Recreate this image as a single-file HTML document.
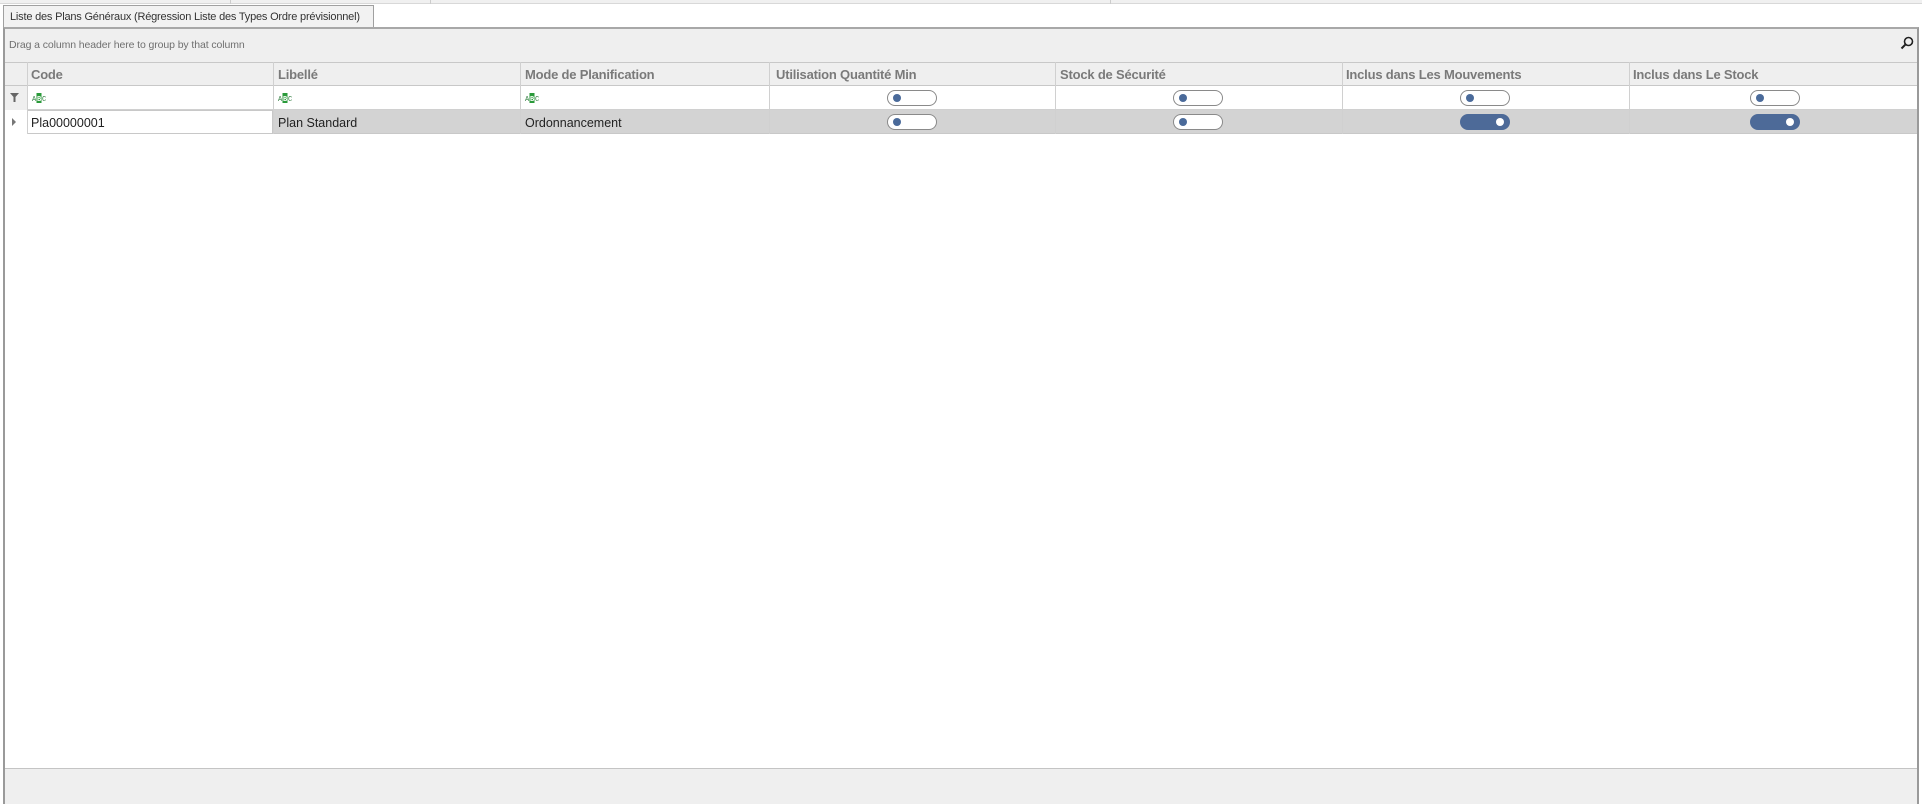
<!DOCTYPE html>
<html><head><meta charset="utf-8"><style>
*{box-sizing:border-box;margin:0;padding:0}
body{width:1922px;height:804px;background:#fff;font-family:"Liberation Sans",sans-serif;position:relative;overflow:hidden}
.a{position:absolute}
.hd{font-weight:bold;color:#7a7a7a;font-size:13px;top:67px;letter-spacing:-0.2px}
.tg{position:absolute;width:50px;height:16px;border-radius:8px;border:1px solid #8a8a8a;background:#fff}
.tg::after{content:"";position:absolute;left:5px;top:3px;width:8px;height:8px;border-radius:50%;background:#4a6a9a}
.tg.on{background:#4d6a98;border-color:#4d6a98}
.tg.on::after{left:auto;right:5px;background:#fff}
.abc{position:absolute;top:93px}
.vl{position:absolute;width:1px;background:#d0d0d0}
.dt{position:absolute;top:116px;font-size:12.5px;color:#222}
</style></head><body>
<div class="a" style="left:0;top:0;width:1922px;height:4px;background:#f0f0f0;border-bottom:1px solid #d8d8d8"></div>
<div class="a" style="left:230px;top:0;width:1px;height:4px;background:#ccc"></div>
<div class="a" style="left:430px;top:0;width:1px;height:4px;background:#ccc"></div>
<div class="a" style="left:1110px;top:0;width:1px;height:4px;background:#ccc"></div>
<div class="a" style="left:3px;top:5px;width:371px;height:23px;background:#f2f2f2;border:1px solid #a0a0a0;border-bottom:none;font-size:11px;color:#333;padding:5px 0 0 6px;letter-spacing:-0.2px">Liste des Plans Généraux (Régression Liste des Types Ordre prévisionnel)</div>
<div class="a" style="left:3px;top:27px;width:1916px;height:777px;border-left:2px solid #9a9a9a;border-right:2px solid #9a9a9a;border-top:2px solid #a8a8a8;background:#fff"></div>
<div class="a" style="left:5px;top:29px;width:1912px;height:33px;background:#efefef;font-size:10.5px;color:#707070;padding:10px 0 0 4px;letter-spacing:-0.1px">Drag a column header here to group by that column</div>
<svg class="a" style="left:1900px;top:36px" width="14" height="14" viewBox="0 0 14 14"><circle cx="8.5" cy="5.5" r="4" fill="none" stroke="#222" stroke-width="1.6"/><path d="M5.5 8.5L1.5 12.5" stroke="#222" stroke-width="2"/></svg>
<div class="a" style="left:5px;top:62px;width:1912px;height:24px;background:#efefef;border-top:1px solid #c8c8c8;border-bottom:1px solid #c8c8c8"></div>
<div class="a" style="left:5px;top:86px;width:22px;height:24px;background:#efefef"></div>
<div class="a" style="left:5px;top:110px;width:22px;height:24px;background:#fff"></div>
<div class="a" style="left:27px;top:110px;width:1890px;height:24px;background:#d3d3d3;border-bottom:1px solid #c8c8c8"></div>
<div class="a" style="left:27px;top:110px;width:246px;height:24px;background:#fff;border:1px solid #c8c8c8"></div>
<div class="a" style="left:27px;top:109px;width:1890px;height:1px;background:#d0d0d0"></div>
<div class="vl" style="left:27px;top:62px;height:72px"></div>
<div class="vl" style="left:273px;top:62px;height:72px"></div>
<div class="vl" style="left:520px;top:62px;height:72px"></div>
<div class="vl" style="left:769px;top:62px;height:72px"></div>
<div class="vl" style="left:1055px;top:62px;height:72px"></div>
<div class="vl" style="left:1342px;top:62px;height:72px"></div>
<div class="vl" style="left:1629px;top:62px;height:72px"></div>
<div class="a hd" style="left:31px">Code</div>
<div class="a hd" style="left:278px">Libellé</div>
<div class="a hd" style="left:525px">Mode de Planification</div>
<div class="a hd" style="left:776px">Utilisation Quantité Min</div>
<div class="a hd" style="left:1060px">Stock de Sécurité</div>
<div class="a hd" style="left:1346px">Inclus dans Les Mouvements</div>
<div class="a hd" style="left:1633px">Inclus dans Le Stock</div>
<svg class="a" style="left:10px;top:93px" width="9" height="9" viewBox="0 0 9 9"><path d="M0 0H9L5.5 4V9H3.5V4Z" fill="#666"/></svg>
<svg class="abc" style="left:32px" width="14" height="10"><rect x="4.5" y="0" width="5" height="10" fill="#2a9a3a"/><text x="0" y="8" font-size="7" font-family="Liberation Mono" fill="#2a7a3a">A</text><text x="5" y="8" font-size="7" font-family="Liberation Mono" fill="#fff" font-weight="bold">B</text><text x="10" y="8" font-size="7" font-family="Liberation Mono" fill="#2a7a3a">C</text></svg>
<svg class="abc" style="left:278px" width="14" height="10"><rect x="4.5" y="0" width="5" height="10" fill="#2a9a3a"/><text x="0" y="8" font-size="7" font-family="Liberation Mono" fill="#2a7a3a">A</text><text x="5" y="8" font-size="7" font-family="Liberation Mono" fill="#fff" font-weight="bold">B</text><text x="10" y="8" font-size="7" font-family="Liberation Mono" fill="#2a7a3a">C</text></svg>
<svg class="abc" style="left:525px" width="14" height="10"><rect x="4.5" y="0" width="5" height="10" fill="#2a9a3a"/><text x="0" y="8" font-size="7" font-family="Liberation Mono" fill="#2a7a3a">A</text><text x="5" y="8" font-size="7" font-family="Liberation Mono" fill="#fff" font-weight="bold">B</text><text x="10" y="8" font-size="7" font-family="Liberation Mono" fill="#2a7a3a">C</text></svg>
<div class="tg" style="left:887px;top:90px"></div>
<div class="tg" style="left:1173px;top:90px"></div>
<div class="tg" style="left:1460px;top:90px"></div>
<div class="tg" style="left:1750px;top:90px"></div>
<svg class="a" style="left:12px;top:118px" width="5" height="8"><path d="M0 0L4 4L0 8Z" fill="#777"/></svg>
<div class="dt" style="left:31px">Pla00000001</div>
<div class="dt" style="left:278px">Plan Standard</div>
<div class="dt" style="left:525px">Ordonnancement</div>
<div class="tg" style="left:887px;top:114px"></div>
<div class="tg" style="left:1173px;top:114px"></div>
<div class="tg on" style="left:1460px;top:114px"></div>
<div class="tg on" style="left:1750px;top:114px"></div>
<div class="a" style="left:5px;top:768px;width:1912px;height:36px;background:#efefef;border-top:1px solid #c4c4c4"></div>
</body></html>
